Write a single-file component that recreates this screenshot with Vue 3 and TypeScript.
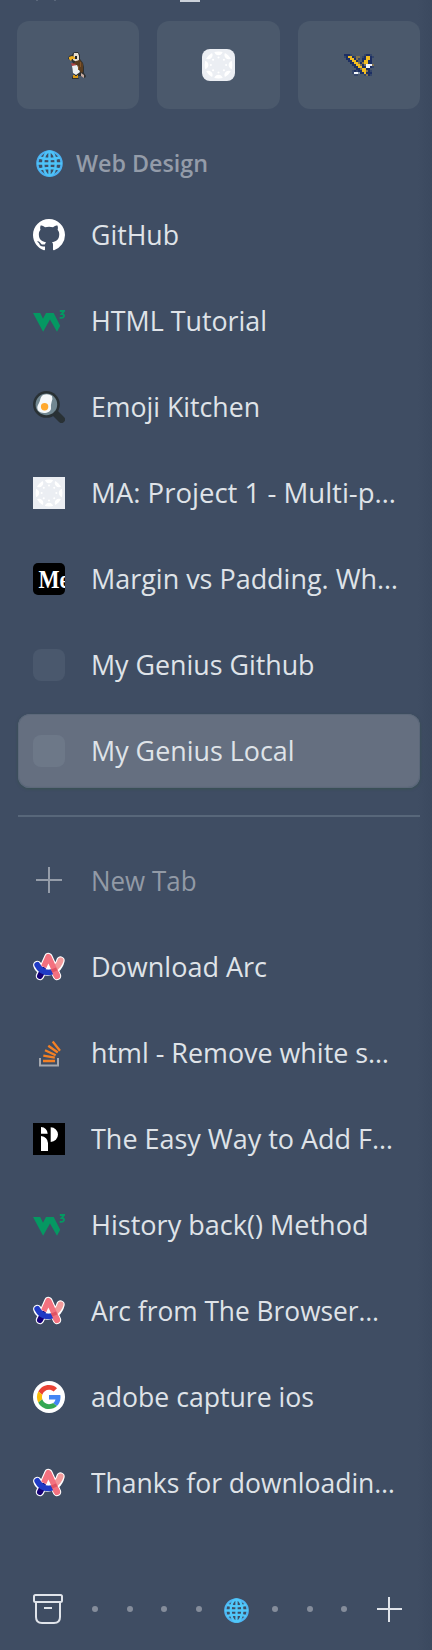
<script setup lang="ts">
import { type Directive } from 'vue'

type Icon = 'github' | 'w3' | 'pan' | 'canvas' | 'medium' | 'blank' | 'plus' | 'arc' | 'stack' | 'premier' | 'google'
interface Tab { icon: Icon; title: string; width: number; active?: boolean; muted?: boolean }

const pinned: Tab[] = [
  { icon: 'github', title: 'GitHub', width: 88 },
  { icon: 'w3', title: 'HTML Tutorial', width: 176 },
  { icon: 'pan', title: 'Emoji Kitchen', width: 169 },
  { icon: 'canvas', title: 'MA: Project 1 - Multi-p…', width: 305 },
  { icon: 'medium', title: 'Margin vs Padding. Wh…', width: 307 },
  { icon: 'blank', title: 'My Genius Github', width: 223.5 },
  { icon: 'blank', title: 'My Genius Local', width: 203.5, active: true },
]
const today: Tab[] = [
  { icon: 'plus', title: 'New Tab', width: 105.5, muted: true },
  { icon: 'arc', title: 'Download Arc', width: 176 },
  { icon: 'stack', title: 'html - Remove white s…', width: 298 },
  { icon: 'premier', title: 'The Easy Way to Add F…', width: 302 },
  { icon: 'w3', title: 'History back() Method', width: 277.5 },
  { icon: 'arc', title: 'Arc from The Browser…', width: 288 },
  { icon: 'google', title: 'adobe capture ios', width: 223 },
  { icon: 'arc', title: 'Thanks for downloadin…', width: 304 },
]
const groups = [pinned, today]

// Condenses a label horizontally to the given width.
const vFit: Directive<HTMLElement, number> = {
  mounted(el, { value }) {
    el.style.transform = `scaleX(${value / el.getBoundingClientRect().width})`
  },
}

const colours: Record<string, string> = {
  n: '#1d2f63', m: '#34466a', y: '#f3bd20', b: '#82724f', w: '#f4f7fc', g: '#8494a8',
}
const wings = [
  'nnnm......mnnm..',
  'mnyynmbb.mnyynm.',
  '.nnyynbm.nnyyn..',
  '..nnyyn..nyynn..',
  '...nnyybnbyynn..',
  '....nnyybnbwwwb.',
  '.....nnyynnwwnm.',
  '......nnbyynn...',
  '....mnmnnyybnm..',
  '....mwwgnnynnn..',
  '.....mm...mbnm..',
]
const pixels = wings.flatMap((row, y) =>
  [...row].map((c, x) => ({ x: x * 2, y: y * 2, fill: colours[c] })).filter(p => p.fill))
const angles = [0, 45, 90, 135, 180, 225, 270, 315]
</script>

<template>
  <main class="sidebar">
    <div class="clipped"><i class="speck"></i><i class="speck"></i><i class="bar"></i></div>
    <section class="favorites">
      <div class="card">
        <svg class="eagle" width="18" height="28" viewBox="0 0 18 28">
          <path d="M5 2 7 1h3l2 3v4l3 4 1 4v6l2 3-1 2-4-2H9l2 3H4v-2l2-2-2-6 1-6-2-3-3-1 1-3 3-1z" fill="#2d3031" />
          <path d="M6 2h4l1 3v4l-2 2-4-2z" fill="#e5ddd0" />
          <path d="M1 6l3-1 3 1v2H4l-1 2-2-2z" fill="#eeae20" />
          <path d="M7 5h2v3H7z" fill="#202326" />
          <path d="M8 10l4-1 3 4v8l-2 1-3-6-5-3z" fill="#5b3d20" />
          <path d="M3 12l5 1-1 2H4z" fill="#b14443" />
          <path d="M4 15l5-1 3 7-4 3-3-2z" fill="#edf0f2" />
          <path d="M13 22l3 2v3l-3-2z" fill="#c5aaa0" />
          <path d="M5 24h2v1h2v-1h1v3H5z" fill="#d99814" />
          <path d="M12 11h1v5h-1zm-2 4h1v4h-1z" fill="#82562a" />
        </svg>
      </div>
      <div class="card">
        <svg class="rounded" width="33" height="32" viewBox="0 0 32 32" preserveAspectRatio="none">
          <rect width="32" height="32" fill="#ebeef3" />
          <clipPath id="disc"><circle cx="16" cy="16" r="13.4" /></clipPath>
          <g fill="#fff">
            <g clip-path="url(#disc)"><circle v-for="a in angles" :key="a" cx="16" cy="2" r="4.2" :transform="`rotate(${a} 16 16)`" /></g>
            <circle v-for="a in angles" :key="a" cx="16" cy="8.6" r="1" :transform="`rotate(${a} 16 16)`" />
          </g>
        </svg>
      </div>
      <div class="card">
        <svg class="wings" width="32" height="22" viewBox="0 0 32 22" shape-rendering="crispEdges">
          <rect v-for="(p, i) in pixels" :key="i" :x="p.x" :y="p.y" width="2" height="2" :fill="p.fill" />
        </svg>
      </div>
    </section>

    <header class="space">
      <svg width="27" height="27" viewBox="0 0 27 27" fill="none" stroke="#4dc3f8" stroke-width="2.4">
        <circle cx="13.5" cy="13.5" r="12.1" stroke="#4bb0f0" /><ellipse cx="13.5" cy="13.5" rx="6.3" ry="12" />
        <path d="M13.5 1v25M1 13.5h25M3 7.5q10.500 3 21 0M3 19.500q10.500-3 21 0" />
      </svg>
      <span v-fit="132" class="space-name">Web Design</span>
    </header>

    <template v-for="(tabs, g) in groups" :key="g">
      <hr v-if="g" class="divider">
      <nav class="tabs">
        <div v-for="tab in tabs" :key="tab.title" class="tab" :class="{ active: tab.active, muted: tab.muted }">
          <svg class="icon" width="32" height="32" viewBox="0 0 32 32">
            <path v-if="tab.icon === 'github'" transform="scale(2)" fill="#fff" d="M8 0C3.58 0 0 3.58 0 8c0 3.54 2.290 6.530 5.470 7.590.4.070.55-.17.55-.38 0-.19-.01-.82-.01-1.490-2.010.37-2.530-.49-2.690-.94-.09-.23-.48-.94-.82-1.130-.28-.15-.68-.52-.01-.53.63-.01 1.080.58 1.230.82.72 1.210 1.870.87 2.330.66.07-.52.28-.87.51-1.070-1.780-.2-3.640-.89-3.640-3.950 0-.87.31-1.590.82-2.150-.08-.2-.36-1.020.08-2.120 0 0 .67-.21 2.200.82.64-.18 1.320-.27 2-.27s1.360.09 2 .27c1.530-1.040 2.200-.82 2.200-.82.44 1.100.16 1.920.08 2.120.51.56.82 1.270.82 2.150 0 3.070-1.870 3.750-3.650 3.950.29.25.54.73.54 1.480 0 1.070-.01 1.930-.01 2.200 0 .21.15.46.55.38A8.010 8.010 0 0 0 16 8c0-4.420-3.580-8-8-8z" />
            <g v-else-if="tab.icon === 'w3'" fill="#059862">
              <path d="M0 8h7.200l2.800 5.800L13 8h7.700l6.500 12.700-3.200 6-7-12.200-6.900 12.200z" />
              <path d="M26.800 6h4.300l-2.500 3q2.700.2 2.400 2.300-.8 2.300-4.400 1.300" fill="none" stroke="#059862" stroke-width="1.900" />
            </g>
            <g v-else-if="tab.icon === 'pan'">
              <path d="m22 22 6.500 6.500" stroke="#293135" stroke-width="7" stroke-linecap="round" />
              <circle cx="13.400" cy="13.400" r="13.400" fill="#293135" /><circle cx="13.400" cy="13.400" r="10.800" fill="#718791" />
              <path d="M10 4q5-2 9 1 1 3-.4 6-1 3-.6 6c.5 4-6 6-10 4.500C4 20 3.400 16 5.500 13 8 9 6.500 6.500 10 4z" fill="#f5f8fa" />
              <circle cx="11.600" cy="15.800" r="3.700" fill="#ffa92e" />
            </g>
            <g v-else-if="tab.icon === 'canvas'">
              <rect width="32" height="32" fill="#ebeef3" />
              <g fill="#fff">
                <g clip-path="url(#disc)"><circle v-for="a in angles" :key="a" cx="16" cy="2" r="4.200" :transform="`rotate(${a} 16 16)`" /></g>
                <circle v-for="a in angles" :key="a" cx="16" cy="8.600" r="1" :transform="`rotate(${a} 16 16)`" />
              </g>
            </g>
            <g v-else-if="tab.icon === 'medium'">
              <clipPath id="tile"><rect width="32" height="32" rx="5" /></clipPath>
              <g clip-path="url(#tile)">
                <rect width="32" height="32" />
                <text x="5.500" y="24.700" class="serif" textLength="31" lengthAdjust="spacingAndGlyphs">Me</text>
              </g>
            </g>
            <rect v-else-if="tab.icon === 'blank'" width="32" height="32" rx="8" :fill="tab.active ? '#6d7888' : '#4a586d'" />
            <path v-else-if="tab.icon === 'plus'" d="M16 2v26M3 15h26" stroke="#959da9" stroke-width="2" />
            <g v-else-if="tab.icon === 'arc'" fill="none" stroke-linecap="round" stroke-linejoin="round">
              <path d="M7 25 15.400 6 24 25M4.300 14C7 23 24 24 27.500 9.500" stroke="#fff" stroke-width="8.400" />
              <path d="M7 25l3-6" stroke="#160078" stroke-width="6" />
              <path d="M20 18.500Q26 15 27.500 9.500" stroke="#f39a9b" stroke-width="6" />
              <path d="M4.300 14Q8 21.500 16 21.300l4-1" stroke="#203bc5" stroke-width="6" />
              <path d="M11 16 15.400 6 24 25" stroke="#f3717f" stroke-width="6.200" stroke-linecap="butt" />
              <path d="m23 23 1 2" stroke="#f3717f" stroke-width="6.200" />
              <path d="m15.400 12.500 2.800 6h-5.600z" fill="#fff" />
              <path d="M11 20.500q4.500 1.500 8 .2" stroke="#203bc5" stroke-width="4.800" stroke-linecap="butt" />
              <path d="m20.500 17.500 1.300 3" stroke="#df5363" stroke-width="5.500" stroke-linecap="butt" />
            </g>
            <g v-else-if="tab.icon === 'stack'" fill="none" stroke-width="2.300">
              <path d="M7 21v7.500h18V21" stroke="#a5a8ae" stroke-width="2" />
              <path d="M10 24h12M10.300 18.700l11.500 2M12 13.300l10.700 5M15.300 8.700l9.400 6.800M19.700 4.500 27 13.700" stroke="#f48024" />
            </g>
            <g v-else-if="tab.icon === 'premier'">
              <rect width="32" height="32" /><path d="M8 4q6 .5 6.700 6.700H8zM8 13q6.500 1 7 7v8H8zM17.700 4.300a7.300 7.300 0 0 1 0 14.600z" fill="#fff" />
            </g>
            <g v-else>
              <circle cx="16" cy="16" r="16" fill="#fff" />
              <g transform="translate(4 4) scale(.5)">
                <path fill="#ea4335" d="M24 9.500c3.540 0 6.710 1.220 9.210 3.600l6.850-6.850C35.900 2.380 30.470 0 24 0 14.620 0 6.510 5.380 2.560 13.220l7.980 6.190C12.430 13.720 17.740 9.500 24 9.500z" />
                <path fill="#4285f4" d="M46.980 24.550c0-1.570-.15-3.090-.38-4.550H24v9.020h12.940c-.58 2.960-2.260 5.480-4.780 7.180l7.730 6C44.400 38.020 46.980 31.840 46.980 24.550z" />
                <path fill="#fbbc05" d="M10.530 28.590A14.500 14.500 0 0 1 10.540 19.410L2.560 13.220a24 24 0 0 0 0 21.560z" />
                <path fill="#34a853" d="M24 48c6.480 0 11.930-2.130 15.890-5.810l-7.730-6c-2.150 1.450-4.920 2.300-8.160 2.300-6.260 0-11.570-4.220-13.470-9.910l-7.970 6.200C6.510 42.620 14.620 48 24 48z" />
              </g>
            </g>
          </svg>
          <span v-fit="tab.width" class="title">{{ tab.title }}</span>
        </div>
      </nav>
    </template>

    <footer class="footer">
      <svg width="30" height="30" viewBox="0 0 30 30" fill="none" stroke="#e0e4ea" stroke-width="2">
        <rect x="1" y="1" width="28" height="7" rx="1.500" /><path d="M3 8v15q0 6 6 6h12q6 0 6-6V8M11 14h8" />
      </svg>
      <div class="dots"><i v-for="n in 4" :key="n"></i></div>
      <svg class="current" width="25" height="25" viewBox="0 0 27 27" fill="none" stroke="#50c8fa" stroke-width="2.500">
        <circle cx="13.500" cy="13.500" r="12.100" stroke="#4eb6f4" /><ellipse cx="13.500" cy="13.500" rx="6.300" ry="12" />
        <path d="M13.500 1v25M1 13.500h25M3 7.500q10.500 3 21 0M3 19.500q10.500-3 21 0" />
      </svg>
      <div class="dots short"><i v-for="n in 3" :key="n"></i></div>
      <svg class="add" width="25" height="25" viewBox="0 0 25 25" stroke="#e0e4ea" stroke-width="2"><path d="M12 0v25M0 12h25" /></svg>
    </footer>
  </main>
</template>

<style>
body { margin: 0; background: #3f4d63; }
</style>

<style scoped>
.sidebar {
  box-sizing: border-box; width: 432px; height: 1650px; overflow: hidden;
  background: linear-gradient(90deg, #3f4d63 0 418px, #3d4b61 424px, #3b495f 432px);
  font-family: "Open Sans", "Noto Sans", sans-serif; color: #dfe3e8;
}
.clipped { display: flex; height: 21px; }
.speck { width: 2px; height: 1px; margin-left: 36px; background: #5a677b; }
.speck + .speck { margin-left: 16px; }
.bar { width: 20px; height: 2px; margin-left: 124px; background: #cbd1da; }
.favorites { display: grid; grid-template-columns: 122px 123px 122px; gap: 18px; margin-left: 17px; }
.card { display: flex; align-items: center; justify-content: center; height: 88px; border-radius: 12px; background: #4b596c; }
.eagle { margin-right: 2px; }
.wings { margin-left: 1px; }
.rounded { border-radius: 8px; }
.space { display: flex; align-items: center; height: 36px; margin: 36px 0 17px 36px; gap: 13px; }
.space-name { font-size: 23.500px; font-weight: 600; line-height: 36px; color: #949ca9; transform-origin: left; white-space: nowrap; }
.tabs { display: flex; flex-direction: column; gap: 12px; padding: 0 12px 0 18px; }
.tab { box-sizing: border-box; display: flex; align-items: center; height: 74px; padding-left: 15px; gap: 26px; border-radius: 12px; }
.active { background: #656f80; box-shadow: inset 0 0 0 1px #5c687a, inset 0 -1px 1px #536176, 0 1px 3px #3549; }
.icon { flex: none; }
.title { font-size: 27.500px; line-height: 38px; white-space: nowrap; transform-origin: left; }
.muted { color: #929aa6; }
.serif { font: bold 26px "Liberation Serif", serif; fill: #fff; }
.divider { height: 2px; margin: 27px 12px 27px 18px; border: 0; background: #58677a; }
.footer { display: flex; align-items: center; height: 30px; margin: 74px 0 0 33px; }
.dots { display: flex; justify-content: space-between; width: 110px; margin-left: 29px; }
.dots i { width: 6px; height: 6px; border-radius: 50%; background: #858d9b; }
.current { margin: 2px 0 0 22px; }
.short { width: 75px; margin-left: 23px; }
.add { margin-left: 30px; }
</style>
